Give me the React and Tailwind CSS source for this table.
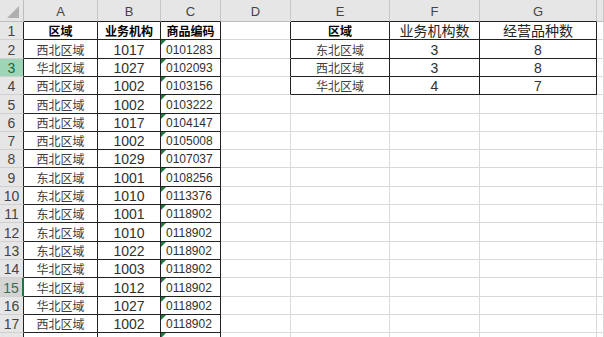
import React from "react";

const rowsData = [
  ["西北区域", "1017", "0101283"],
  ["华北区域", "1027", "0102093"],
  ["西北区域", "1002", "0103156"],
  ["西北区域", "1002", "0103222"],
  ["西北区域", "1017", "0104147"],
  ["西北区域", "1002", "0105008"],
  ["西北区域", "1029", "0107037"],
  ["东北区域", "1001", "0108256"],
  ["东北区域", "1010", "0113376"],
  ["东北区域", "1001", "0118902"],
  ["东北区域", "1010", "0118902"],
  ["东北区域", "1022", "0118902"],
  ["华北区域", "1003", "0118902"],
  ["华北区域", "1012", "0118902"],
  ["华北区域", "1027", "0118902"],
  ["西北区域", "1002", "0118902"],
];

const summary = [
  ["区域", "业务机构数", "经营品种数"],
  ["东北区域", "3", "8"],
  ["西北区域", "3", "8"],
  ["华北区域", "4", "7"],
];

function Tri() {
  return (
    <div className="absolute left-0 top-0 h-0 w-0 border-t-[5px] border-r-[5px] border-t-[#1e7a3f] border-r-transparent" />
  );
}

const grid = "border-r border-b border-r-[#d9d9d9] border-b-[#d9d9d9]";
const black = "border-r border-b border-r-[#222] border-b-[#222]";

function ColHead({ label, dark }) {
  return (
    <div
      className={
        "flex items-center justify-center bg-[#e6e6e6] pt-[2px] text-[13px] leading-none text-[#444] border-r border-r-[#c8c8c8] border-b " +
        (dark ? "border-b-[#222]" : "border-b-[#bdbdbd]")
      }
    >
      {label}
    </div>
  );
}

function RowHead({ n }) {
  let cls =
    "flex items-end justify-center pb-[1px] text-[14px] leading-none border-b border-b-[#d0d0d0] ";
  if (n === 3) cls += "bg-[#9fd5b7] text-[#1d6b40] border-r border-r-[#222]";
  else if (n === 15)
    cls += "bg-[#d4d4d4] text-[#3b6b50] border-r-2 border-r-[#217346]";
  else cls += "bg-[#e6e6e6] text-[#444] border-r border-r-[#222]";
  return <div className={cls}>{n <= 17 ? n : ""}</div>;
}

export default function App() {
  const cells = [];
  cells.push(
    <div
      key="corner"
      className="relative bg-[#e6e6e6] border-r border-b border-r-[#bdbdbd] border-b-[#bdbdbd]"
    >
      <svg className="absolute left-0 top-0" width="24" height="22">
        <polygon points="19,6 19,18 7,18" fill="#b0b0b0" />
      </svg>
    </div>
  );
  ["A", "B", "C", "D", "E", "F", "G", ""].forEach((l, i) => {
    cells.push(
      <ColHead
        key={"h" + i}
        label={l}
        dark={l === "A" || l === "B" || l === "C" || l === "E" || l === "F" || l === "G"}
      />
    );
  });

  for (let r = 1; r <= 18; r++) {
    cells.push(<RowHead key={"r" + r} n={r} />);
    if (r === 1) {
      cells.push(
        <div key={"a" + r} className={"flex items-end justify-center pb-[1px] text-[12px] leading-none font-bold text-black " + black}>区域</div>,
        <div key={"b" + r} className={"flex items-end justify-center pb-[1px] text-[12px] leading-none font-bold text-black " + black}>业务机构</div>,
        <div key={"c" + r} className={"flex items-end justify-center pb-[1px] text-[12px] leading-none font-bold text-black " + black}>商品编码</div>
      );
    } else if (r <= 17) {
      const d = rowsData[r - 2];
      cells.push(
        <div key={"a" + r} className={"flex items-end justify-center pb-[1px] text-[12px] leading-none text-[#404040] " + black}>{d[0]}</div>,
        <div key={"b" + r} className={"flex items-end justify-center pb-[1px] text-[14px] leading-none text-[#303030] " + black}>{d[1]}</div>,
        <div key={"c" + r} className={"relative flex items-end justify-start pb-[2px] pl-[5px] text-[12px] leading-none text-[#303030] " + black}>
          <Tri />
          {d[2]}
        </div>
      );
    } else {
      cells.push(
        <div key={"a" + r} className={black} />,
        <div key={"b" + r} className={black} />,
        <div key={"c" + r} className={"relative " + black}>
          <Tri />
        </div>
      );
    }
    cells.push(
      <div
        key={"d" + r}
        className={
          r <= 4
            ? "border-r border-b border-r-[#222] border-b-[#d9d9d9]"
            : grid
        }
      />
    );
    if (r <= 4) {
      const s = summary[r - 1];
      cells.push(
        <div key={"e" + r} className={"flex items-end justify-center pb-[1px] text-[12px] leading-none " + (r === 1 ? "font-bold text-black " : "text-[#404040] ") + black}>{s[0]}</div>,
        <div key={"f" + r} className={"flex items-end justify-center pb-[1px] text-[14px] leading-none " + (r === 1 ? "text-[#222] " : "text-[#303030] ") + black}>{s[1]}</div>,
        <div key={"g" + r} className={"flex items-end justify-center pb-[1px] text-[14px] leading-none " + (r === 1 ? "text-[#222] " : "text-[#303030] ") + black}>{s[2]}</div>
      );
    } else {
      cells.push(
        <div key={"e" + r} className={grid} />,
        <div key={"f" + r} className={grid} />,
        <div key={"g" + r} className={grid} />
      );
    }
    cells.push(<div key={"hh" + r} className={grid} />);
  }

  return (
    <div className="h-[337px] w-[604px] overflow-hidden bg-white font-['Liberation_Sans','Noto_Sans_CJK_SC',sans-serif]">
      <div className="grid grid-cols-[24px_74px_63px_60px_70px_99px_90px_117px_1fr] grid-rows-[22px_18px_19px_18px_18px_19px_18px_18px_18px_19px_18px_18px_19px_18px_18px_19px_18px_18px_18px]">
        {cells}
      </div>
    </div>
  );
}
